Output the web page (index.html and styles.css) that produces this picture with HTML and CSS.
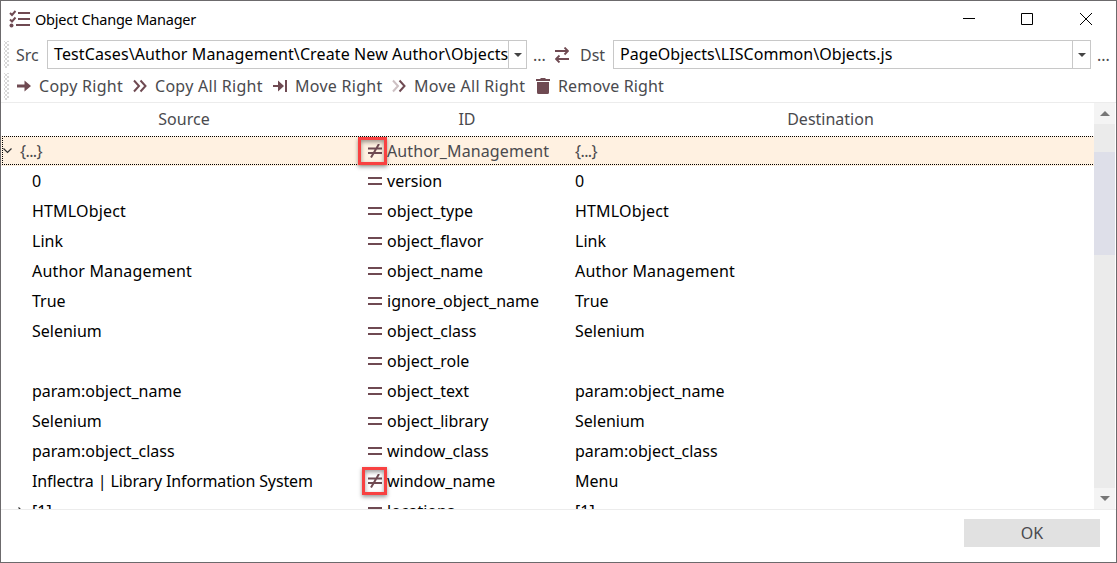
FILE: index.html
```html
<!DOCTYPE html>
<html lang="en">
<head>
<meta charset="utf-8">
<title>Object Change Manager</title>
<link rel="stylesheet" href="styles.css">
</head>
<body>
<svg class="defs" width="0" height="0">
  <symbol id="eq" viewBox="0 0 14 14"><path d="M0 4h14M0 10h14" stroke="currentColor" stroke-width="2" fill="none"/></symbol>
  <symbol id="ne" viewBox="0 0 14 14"><path d="M0 4.500h14M0 9h14M3 13.500L11 0" stroke="currentColor" stroke-width="2" fill="none"/></symbol>
</svg>
<div class="window">
  <header class="titlebar">
    <svg class="app-icon" width="21" height="18" viewBox="0 0 21 18"><path d="M1 3l2 2 3.500-4M1 9.500l2 2 3.500-4" fill="none" stroke="currentColor" stroke-width="1.900"/><circle cx="2.500" cy="15.500" r="2" fill="currentColor"/><path d="M9 3h12M9 9h12M7 15h14" stroke="currentColor" stroke-width="2"/></svg>
    <span class="title">Object Change Manager</span>
    <div class="controls">
      <svg width="12" height="12" viewBox="0 0 12 12"><path d="M0 5.500h12"/></svg>
      <svg width="12" height="12" viewBox="0 0 12 12"><path d="M.5.5h11v11H.5z"/></svg>
      <svg class="close" width="12" height="12" viewBox="0 0 12 12"><path d="M0 0l12 12M12 0L0 12"/></svg>
    </div>
  </header>
  <div class="paths">
    <i class="grip"></i>
    <span class="label src">Src</span>
    <div class="combo combo-src"><span class="value">TestCases\Author Management\Create New Author\Objects</span><span class="drop"><i></i></span></div>
    <span class="dots">...</span>
    <svg class="swap" width="14" height="16" viewBox="0 0 14 16"><path d="M0 4h12M9.500.5L13 4 9.500 7.500M14 12H2M4.500 8.500L1 12l3.500 3.500" fill="none" stroke="currentColor" stroke-width="1.800"/></svg>
    <span class="label dst">Dst</span>
    <div class="combo combo-dst"><span class="value">PageObjects\LISCommon\Objects.js</span><span class="drop"><i></i></span></div>
    <span class="dots end">...</span>
  </div>
  <div class="tools">
    <i class="grip"></i>
    <button class="tool t1"><svg width="14" height="14" viewBox="0 0 14 14"><path d="M0 5.500h7.500V1.500L14 7l-6.500 5.500v-4H0z" fill="currentColor"/></svg><span>Copy Right</span></button>
    <button class="tool t2"><svg width="14" height="14" viewBox="0 0 14 14"><path d="M1 1.500L6 7l-5 5.500M7.500 1.500l5 5.500-5 5.500" fill="none" stroke="currentColor" stroke-width="2"/></svg><span>Copy All Right</span></button>
    <button class="tool t3"><svg width="14" height="14" viewBox="0 0 14 14"><path d="M0 6h5V1.500L11 7l-6 5.500V8H0zM12 1h2v12h-2z" fill="currentColor"/></svg><span>Move Right</span></button>
    <button class="tool t4"><svg width="14" height="14" viewBox="0 0 14 14"><path class="faint" d="M1 1.500L6 7l-5 5.500" fill="none" stroke="currentColor" stroke-width="2"/><path d="M7.500 1.500l5 5.500-5 5.500" fill="none" stroke="currentColor" stroke-width="2"/></svg><span>Move All Right</span></button>
    <button class="tool t5"><svg width="14" height="16" viewBox="0 0 14 16"><path d="M0 1h4l1-1h4l1 1h4v2H0zM1 4h12v10.500q0 1.500-1.500 1.500h-9Q1 16 1 14.500z" fill="currentColor"/></svg><span>Remove Right</span></button>
  </div>
  <main class="body">
    <div class="table">
      <div class="row head"><span>Source</span><span>ID</span><span>Destination</span></div>
      <div class="row selected"><span class="source"><svg class="chev" width="9" height="6" viewBox="0 0 9 6"><path d="M.5.5l4 4 4-4"/></svg><b class="braces">{...}</b></span><span class="id"><em class="mark wide"></em><svg class="cmp"><use href="#ne"/></svg><b class="am">Author_Management</b></span><span class="dest"><b class="braces">{...}</b></span></div>
      <div class="row"><span class="source">0</span><span class="id"><svg class="cmp"><use href="#eq"/></svg>version</span><span class="dest">0</span></div>
      <div class="row"><span class="source loose">HTMLObject</span><span class="id"><svg class="cmp"><use href="#eq"/></svg>object_type</span><span class="dest loose">HTMLObject</span></div>
      <div class="row"><span class="source">Link</span><span class="id"><svg class="cmp"><use href="#eq"/></svg>object_flavor</span><span class="dest">Link</span></div>
      <div class="row"><span class="source loose">Author Management</span><span class="id"><svg class="cmp"><use href="#eq"/></svg>object_name</span><span class="dest loose">Author Management</span></div>
      <div class="row"><span class="source">True</span><span class="id"><svg class="cmp"><use href="#eq"/></svg>ignore_object_name</span><span class="dest">True</span></div>
      <div class="row"><span class="source">Selenium</span><span class="id"><svg class="cmp"><use href="#eq"/></svg>object_class</span><span class="dest">Selenium</span></div>
      <div class="row"><span class="source"></span><span class="id"><svg class="cmp"><use href="#eq"/></svg>object_role</span><span class="dest"></span></div>
      <div class="row"><span class="source">param:object_name</span><span class="id"><svg class="cmp"><use href="#eq"/></svg>object_text</span><span class="dest">param:object_name</span></div>
      <div class="row"><span class="source">Selenium</span><span class="id"><svg class="cmp"><use href="#eq"/></svg>object_library</span><span class="dest">Selenium</span></div>
      <div class="row"><span class="source">param:object_class</span><span class="id"><svg class="cmp"><use href="#eq"/></svg>window_class</span><span class="dest">param:object_class</span></div>
      <div class="row"><span class="source tight">Inflectra | Library Information System</span><span class="id"><em class="mark"></em><svg class="cmp"><use href="#ne"/></svg>window_name</span><span class="dest">Menu</span></div>
      <div class="row"><span class="source"><svg class="expand" width="6" height="9" viewBox="0 0 6 9"><path d="M.5.5l4 4-4 4"/></svg>[1]</span><span class="id"><svg class="cmp"><use href="#eq"/></svg>locations</span><span class="dest">[1]</span></div>
    </div>
    <div class="scroll"><div class="arrow"><i class="up"></i></div><div class="track"><div class="thumb"></div></div><div class="arrow"><i class="down"></i></div></div>
  </main>
  <footer class="footer"><button class="ok">OK</button></footer>
</div>
</body>
</html>
```
FILE: styles.css
```css
* { box-sizing: border-box; }
body { margin: 0; font-family: "Noto Sans", "Open Sans", sans-serif; font-size: 16px; color: #000; }
button { font: inherit; border: 0; background: none; padding: 0; color: inherit; }
svg { display: block; flex: none; }
.defs { position: absolute; }
.window { width: 1117px; height: 563px; border: 1px solid #6c6a6c; background: #fff; display: flex; flex-direction: column; overflow: hidden; }

.titlebar { height: 39px; flex: none; display: flex; align-items: center; padding: 0 24px 4px 8px; }
.app-icon { color: #6f4a52; margin-right: 5px; }
.title { font-size: 14.5px; letter-spacing: -.22px; }
.controls { margin-left: auto; display: flex; gap: 46px; }
.controls svg { overflow: visible; fill: none; stroke: #000; stroke-width: 1; }
.controls .close { margin-left: 1px; }

.paths, .tools { display: flex; align-items: center; flex: none; color: #4a4a4e; white-space: nowrap; }
.paths { height: 29px; }
.tools { height: 33px; padding-top: 1px; }
.grip { width: 5px; height: 27px; margin-left: 3px; margin-right: 1px; flex: none; background-image: radial-gradient(circle, #aaa 0.6px, transparent 0.8px), radial-gradient(circle, #aaa 0.6px, transparent 0.8px); background-size: 4px 4px; background-position: 0 0, 2px 2px; }
.label { flex: none; }
.src { width: 31px; padding-left: 6px; margin-right: 6px; }
.combo { height: 29px; border: 1px solid #c8c8c8; display: flex; color: #000; flex: none; }
.combo-src { width: 480px; }
.combo-dst { width: 478px; }
.value { flex: 1; min-width: 0; padding-left: 6px; line-height: 26px; overflow: hidden; letter-spacing: .06px; }
.combo-src .value { letter-spacing: .115px; }
.drop { width: 18px; border-left: 1px solid #c8c8c8; display: flex; align-items: center; justify-content: center; flex: none; }
.drop i { border: 4px solid transparent; border-top-color: #444; border-bottom: 0; }
.dots { width: 13px; margin-left: 6px; flex: none; }
.swap { margin: 0 0 0 9px; color: #6f4a52; }
.dst { width: 25px; margin: 0 8px 0 11px; }
.end { margin-left: 6px; }
.tool { display: flex; align-items: center; gap: 8px; flex: none; letter-spacing: .28px; }
.tool svg { color: #6f4a52; }
.t1 { width: 116px; margin-left: 7px; }
.t2 { width: 140px; }
.t3 { width: 119px; }
.t4 { width: 144px; }
.t5 { width: 140px; letter-spacing: .15px; }
.faint { opacity: .35; }

.body { height: 408px; flex: none; border-top: 1px solid #ececec; border-bottom: 1px solid #ececec; display: flex; }
.table { flex: 1; overflow: hidden; }
.row { display: grid; grid-template-columns: 366px 200px 1fr; height: 30px; align-items: center; white-space: nowrap; line-height: 28px; }
.head { height: 33px; padding-bottom: 2px; color: #4a4a4e; text-align: center; }
.source { padding-left: 31px; display: flex; align-items: center; }
.id { display: flex; align-items: center; position: relative; padding-left: 1px; }
.dest { padding-left: 8px; }
.loose { letter-spacing: .17px; }
.tight { letter-spacing: -.12px; }
.cmp { width: 14px; height: 14px; margin-right: 5px; color: #6f4a52; }
.row b { font-weight: normal; }
.row .braces { letter-spacing: -.6px; }
.row .am { letter-spacing: .12px; }
.selected { background: #fff1e1; color: #4a4a4e; position: relative; }
.selected::after { content: ""; position: absolute; inset: 0 0 1px 1px; background: repeating-linear-gradient(90deg, #000 0 1px, transparent 1px 2px) top / 100% 1px no-repeat, repeating-linear-gradient(90deg, #000 0 1px, transparent 1px 2px) bottom / 100% 1px no-repeat, repeating-linear-gradient(#000 0 1px, transparent 1px 2px) left / 1px 100% no-repeat; }
.selected .source { padding-left: 2px; }
.chev { margin-right: 8px; }
.chev path, .expand path { fill: none; stroke: #333; stroke-width: 1.2; }
.expand { margin: 0 8px 0 -14px; }
.mark { position: absolute; left: -5px; top: 0; width: 25px; height: 28px; border: 3px solid #f84141; box-shadow: 0 2px 4px #0006, inset 0 2px 4px #0006; z-index: 1; }
.mark.wide { left: -9px; width: 29px; }

.scroll { width: 21px; margin-right: 1px; display: flex; flex-direction: column; }
.arrow { height: 21px; background: #f4f4f4; display: flex; align-items: center; justify-content: center; }
.up, .down { border: 5px solid transparent; }
.up { border-bottom-color: #777; border-top: 0; }
.down { border-top-color: #777; border-bottom: 0; }
.track { flex: 1; background: #ebebeb; padding-top: 28px; }
.thumb { height: 103px; background: #dedfe9; }
.footer { flex: 1; padding: 9px 16px 0 0; display: flex; justify-content: flex-end; align-items: flex-start; }
.ok { width: 136px; height: 28px; background: #e1e1e1; color: #4a4a4e; line-height: 27px; }
```
